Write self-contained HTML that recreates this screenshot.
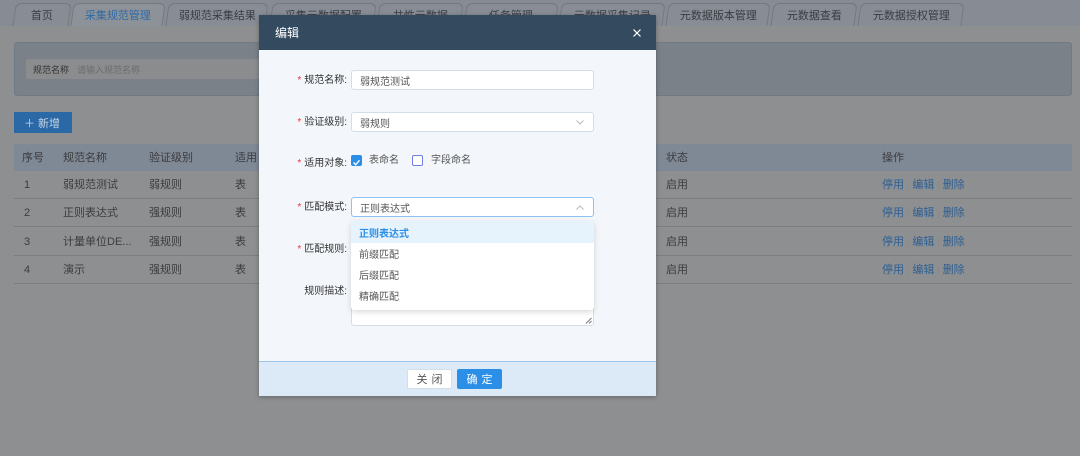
<!DOCTYPE html>
<html><head><meta charset="utf-8"><style>
*{margin:0;padding:0;box-sizing:border-box}
body{width:1080px;height:456px;overflow:hidden;background:#8e8f90;font-family:"Liberation Sans","Noto Sans CJK SC",sans-serif;position:relative;color:#333}
.a{position:absolute}
.tabbar{left:0;top:0;width:1080px;height:26px;background:#868b94}
.tab{position:absolute;top:3px;height:23px;border:1px solid #73787f;border-bottom:none;border-radius:6px 6px 0 0;font-size:11px;text-align:center;color:#3a3d42;background:#878c95;transform:skewX(-8deg);display:flex;align-items:center;justify-content:center}
.tab span{display:inline-block;transform:skewX(8deg)}
.t{font-size:11px;color:#3b3c3e;position:absolute;height:14px;line-height:14px;display:flex;align-items:center;white-space:nowrap}
.lab{position:absolute;font-size:10px;color:#333;text-align:right;width:90px;height:14px;line-height:14px}
.lab b{color:#e33;font-weight:normal;margin-right:3px}
.inp{position:absolute;left:351px;width:243px;height:20px;background:#fff;border:1px solid #d4dde8;border-radius:3px;font-size:10px;padding-left:8px;color:#555;display:flex;align-items:center}
.op{color:#2d5f94}
.op i{font-style:normal;color:#888;margin:0 3px;font-size:9px}
</style></head><body>
<div class="a tabbar"></div>
<div class="tab" style="left:14px;width:56px"><span>首页</span></div>
<div class="tab" style="left:72px;width:92px;background:#8d9299;color:#2f6aa6"><span>采集规范管理</span></div>
<div class="tab" style="left:167px;width:100px"><span>弱规范采集结果</span></div>
<div class="tab" style="left:271px;width:104px"><span>采集元数据配置</span></div>
<div class="tab" style="left:378px;width:84px"><span>共性元数据</span></div>
<div class="tab" style="left:465px;width:92px"><span>任务管理</span></div>
<div class="tab" style="left:560px;width:104px"><span>元数据采集记录</span></div>
<div class="tab" style="left:667px;width:102px"><span>元数据版本管理</span></div>
<div class="tab" style="left:772px;width:84px"><span>元数据查看</span></div>
<div class="tab" style="left:859px;width:104px"><span>元数据授权管理</span></div>

<div class="a" style="left:14px;top:42px;width:1058px;height:54px;background:#7a8189;border:1px solid #6f7a86;border-radius:3px"></div>
<div class="a" style="left:26px;top:59px;width:240px;height:20px;background:#8a8c8e;border-radius:2px;font-size:9px;padding-left:7px;color:#333;display:flex;align-items:center">规范名称 <span style="color:#6a6c6e;margin-left:8px">请输入规范名称</span></div>

<div class="a" style="left:14px;top:112px;width:58px;height:21px;background:#2a68a6;color:#c7d6e6;font-size:11px;padding-left:10px;display:flex;align-items:center">＋&nbsp;新增</div>

<div class="a" style="left:14px;top:144px;width:1058px;height:27px;background:#7f8895"></div>
<div class="a" style="left:14px;top:198px;width:1058px;height:1px;background:#7c7d7f"></div>
<div class="a" style="left:14px;top:226px;width:1058px;height:1px;background:#7c7d7f"></div>
<div class="a" style="left:14px;top:255px;width:1058px;height:1px;background:#7c7d7f"></div>
<div class="a" style="left:14px;top:283px;width:1058px;height:1px;background:#7c7d7f"></div>
<div class="t" style="left:22px;top:151px">序号</div><div class="t" style="left:63px;top:151px">规范名称</div><div class="t" style="left:149px;top:151px">验证级别</div><div class="t" style="left:235px;top:151px">适用</div><div class="t" style="left:666px;top:151px">状态</div><div class="t" style="left:882px;top:151px">操作</div>
<div class="t" style="left:24px;top:178px">1</div><div class="t" style="left:63px;top:178px">弱规范测试</div><div class="t" style="left:149px;top:178px">弱规则</div><div class="t" style="left:235px;top:178px">表</div><div class="t" style="left:666px;top:178px">启用</div>
<div class="t" style="left:24px;top:206px">2</div><div class="t" style="left:63px;top:206px">正则表达式</div><div class="t" style="left:149px;top:206px">强规则</div><div class="t" style="left:235px;top:206px">表</div><div class="t" style="left:666px;top:206px">启用</div>
<div class="t" style="left:24px;top:235px">3</div><div class="t" style="left:63px;top:235px">计量单位DE...</div><div class="t" style="left:149px;top:235px">强规则</div><div class="t" style="left:235px;top:235px">表</div><div class="t" style="left:666px;top:235px">启用</div>
<div class="t" style="left:24px;top:263px">4</div><div class="t" style="left:63px;top:263px">演示</div><div class="t" style="left:149px;top:263px">强规则</div><div class="t" style="left:235px;top:263px">表</div><div class="t" style="left:666px;top:263px">启用</div>
<div class="t op" style="left:882px;top:178px">停用<i>|</i>编辑<i>|</i>删除</div>
<div class="t op" style="left:882px;top:206px">停用<i>|</i>编辑<i>|</i>删除</div>
<div class="t op" style="left:882px;top:235px">停用<i>|</i>编辑<i>|</i>删除</div>
<div class="t op" style="left:882px;top:263px">停用<i>|</i>编辑<i>|</i>删除</div>

<!-- modal -->
<div class="a" style="left:259px;top:15px;width:397px;height:381px;background:#f3f6fa;box-shadow:0 1px 4px rgba(0,0,0,.3)"></div>
<div class="a" style="left:259px;top:15px;width:397px;height:35px;background:#344a5f;color:#fff;font-size:12px;padding-left:16px;display:flex;align-items:center">编辑</div>
<svg class="a" style="left:633px;top:29px" width="8" height="8" viewBox="0 0 8 8"><path d="M0.5 0.5L7.5 7.5M7.5 0.5L0.5 7.5" stroke="#fff" stroke-width="1.2"/></svg>
<div class="a" style="left:259px;top:361px;width:397px;height:35px;background:#dce9f6;border-top:1px solid #9cc6ee"></div>
<div class="a" style="left:407px;top:369px;width:45px;height:20px;background:#fff;border:1px solid #d6dde5;border-radius:2px;font-size:11px;color:#555;letter-spacing:4px;display:flex;align-items:center;justify-content:center;padding-left:4px">关闭</div>
<div class="a" style="left:457px;top:369px;width:45px;height:20px;background:#2b8fe8;border-radius:2px;font-size:11px;color:#fff;letter-spacing:4px;display:flex;align-items:center;justify-content:center;padding-left:4px">确定</div>

<div class="lab" style="left:257px;top:74px"><b>*</b>规范名称:</div>
<div class="inp" style="top:70px">弱规范测试</div>
<div class="lab" style="left:257px;top:116px"><b>*</b>验证级别:</div>
<div class="inp" style="top:112px">弱规则<svg style="position:absolute;right:9px;top:7px" width="8" height="5" viewBox="0 0 8 5"><path d="M0.5 0.5L4 4L7.5 0.5" stroke="#bbb" fill="none"/></svg></div>
<div class="lab" style="left:257px;top:157px"><b>*</b>适用对象:</div>
<div class="a" style="left:351px;top:155px;width:11px;height:11px;background:#2b8fe8;border-radius:2px"><svg width="11" height="11" viewBox="0 0 11 11"><path d="M2.5 5.5L4.7 7.7L8.5 3.3" stroke="#fff" stroke-width="1.4" fill="none"/></svg></div>
<div class="a" style="left:369px;top:154px;font-size:10px;color:#555;line-height:13px">表命名</div>
<div class="a" style="left:412px;top:155px;width:11px;height:11px;background:#fff;border:1px solid #6d7fe0;border-radius:2px"></div>
<div class="a" style="left:431px;top:154px;font-size:10px;color:#555;line-height:13px">字段命名</div>
<div class="lab" style="left:257px;top:201px"><b>*</b>匹配模式:</div>
<div class="inp" style="top:197px;border-color:#8cc3f2">正则表达式<svg style="position:absolute;right:9px;top:7px" width="8" height="5" viewBox="0 0 8 5"><path d="M0.5 4.5L4 1L7.5 4.5" stroke="#bbb" fill="none"/></svg></div>
<div class="lab" style="left:257px;top:243px"><b>*</b>匹配规则:</div>
<div class="lab" style="left:257px;top:285px">规则描述:</div>
<div class="a" style="left:351px;top:280px;width:243px;height:46px;background:#fff;border:1px solid #d4dde8;border-radius:3px"><svg style="position:absolute;right:1px;bottom:1px" width="7" height="7" viewBox="0 0 7 7"><path d="M6.5 1L1 6.5M6.5 4L4 6.5" stroke="#777"/></svg></div>
<div class="a" style="left:351px;top:221px;width:243px;height:89px;background:#fff;border-radius:3px;box-shadow:0 2px 6px rgba(0,0,0,.15);font-size:10px;color:#555">
<div style="height:22px;padding-left:8px;background:#e6f3fc;color:#2b8fe8;font-weight:bold;display:flex;align-items:center">正则表达式</div>
<div style="height:21px;padding-left:8px;display:flex;align-items:center">前缀匹配</div>
<div style="height:21px;padding-left:8px;display:flex;align-items:center">后缀匹配</div>
<div style="height:21px;padding-left:8px;display:flex;align-items:center">精确匹配</div>
</div>
</body></html>
